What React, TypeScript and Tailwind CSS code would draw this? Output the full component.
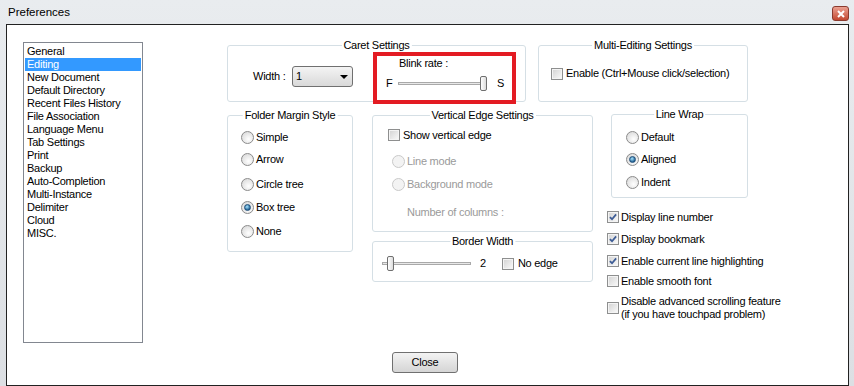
import React from "react";

const Radio = ({ checked = false, disabled = false }: { checked?: boolean; disabled?: boolean }) => (
  <span
    className={`inline-flex items-center justify-center w-[13px] h-[13px] rounded-full border shrink-0 ${
      disabled
        ? "border-[#c9c9c9] bg-[#f3f3f3]"
        : "border-[#8b8b8b] bg-[radial-gradient(circle_at_60%_65%,#ffffff,#dcdcdc_80%)]"
    }`}
  >
    {checked && (
      <span className="w-[7px] h-[7px] rounded-full border border-[#1d4d78] bg-[radial-gradient(circle_at_40%_35%,#a6e4ff,#1a5a8e_75%)]" />
    )}
  </span>
);

const Check = ({ checked = false }: { checked?: boolean }) => (
  <span className="inline-flex items-center justify-center w-[12px] h-[12px] border border-[#8e8f8f] bg-white shrink-0">
    <span className="flex items-center justify-center w-[10px] h-[10px] border border-[#f4f4f4] bg-gradient-to-br from-[#d6d6d6] to-[#f7f7f7]">
      {checked && (
        <svg width="8" height="8" viewBox="0 0 9 9">
          <path d="M1 4.6 L3.4 7 L8 1.6" fill="none" stroke="#3d5c95" strokeWidth="2" />
        </svg>
      )}
    </span>
  </span>
);

const Group = ({
  title,
  className,
  children,
}: {
  title: string;
  className: string;
  children?: React.ReactNode;
}) => (
  <div className={`relative border border-[#d5dfe5] rounded-[3px] shrink-0 ${className}`}>
    <span className="absolute left-1/2 -translate-x-1/2 -top-[7px] bg-white px-[2px] leading-[13px] whitespace-nowrap">
      {title}
    </span>
    {children}
  </div>
);

const Thumb = ({ className }: { className: string }) => (
  <span
    className={`absolute top-0 w-[7px] h-[15px] rounded-[2px] border border-[#6f6f6f] bg-gradient-to-r from-[#ffffff] to-[#dcdcdc] ${className}`}
  />
);

const listItems = [
  "General",
  "Editing",
  "New Document",
  "Default Directory",
  "Recent Files History",
  "File Association",
  "Language Menu",
  "Tab Settings",
  "Print",
  "Backup",
  "Auto-Completion",
  "Multi-Instance",
  "Delimiter",
  "Cloud",
  "MISC.",
];

export default function App() {
  return (
    <div className="w-[854px] h-[386px] flex flex-col bg-gradient-to-b from-[#e9ecef] to-[#dcdfe3] font-['Liberation_Sans',Arial,sans-serif] text-[11px] leading-[13px] tracking-[-0.25px] text-black overflow-hidden">
      {/* Title bar */}
      <div className="h-[24px] flex items-start shrink-0">
        <span className="ml-[8px] mt-[5px] text-[11.5px] leading-[15px] tracking-normal">Preferences</span>
        <div className="ml-auto mr-[5px] mt-[6px] w-[17px] h-[15px] rounded-[3px] border border-[#8a3a2e] bg-gradient-to-b from-[#eba091] to-[#c2462f] flex items-center justify-center">
          <svg width="8" height="8" viewBox="0 0 8 8">
            <path d="M1 1 L7 7 M7 1 L1 7" stroke="#ffffff" strokeWidth="2" />
          </svg>
        </div>
      </div>

      {/* Body */}
      <div className="ml-[6px] w-[843px] h-[362px] border border-[#222222] bg-white flex shrink-0">
        {/* List */}
        <div className="ml-[16px] mt-[17px] w-[120px] h-[301px] border border-[#828790] pt-[2px] px-[1px] flex flex-col shrink-0">
          {listItems.map((it) => (
            <div
              key={it}
              className={`h-[13px] leading-[13px] pl-[2px] whitespace-nowrap ${
                it === "Editing" ? "bg-[#3399ff] text-white" : ""
              }`}
            >
              {it}
            </div>
          ))}
        </div>

        {/* Right area */}
        <div className="ml-[84px] flex flex-col">
          {/* Row 1 */}
          <div className="flex items-start mt-[20px]">
            <Group title="Caret Settings" className="w-[299px] h-[57px] flex items-start">
              <div className="flex items-center ml-[25px] mt-[20px] h-[21px]">
                <span className="w-[39px]">Width :</span>
                <div className="w-[61px] h-[21px] border border-[#707070] rounded-[3px] bg-gradient-to-b from-[#f4f4f4] to-[#d9d9d9] flex items-center pl-[3px] pr-[4px]">
                  <span className="flex-1">1</span>
                  <svg width="8" height="4" viewBox="0 0 8 4">
                    <polygon points="0,0 8,0 4,4" fill="#000000" />
                  </svg>
                </div>
              </div>
              <div className="ml-[20px] mt-[6px] w-[143px] h-[52px] border-[4px] border-[#e31b23] shrink-0 flex flex-col">
                <span className="ml-[22px] mt-[1px]">Blink rate :</span>
                <div className="flex items-center mt-[6px] h-[15px] pl-[9px]">
                  <span className="w-[12px]">F</span>
                  <div className="relative w-[90px] h-[15px]">
                    <span className="absolute left-0 right-[4px] top-[6px] h-[3px] border border-[#a9a9a9] bg-[#e8e8e8]" />
                    <Thumb className="left-[82px]" />
                  </div>
                  <span className="ml-[9px]">S</span>
                </div>
              </div>
            </Group>

            <Group title="Multi-Editing Settings" className="ml-[12px] w-[210px] h-[57px]">
              <div className="flex items-center gap-[3px] ml-[12px] mt-[21px] h-[13px]">
                <Check />
                <span>Enable (Ctrl+Mouse click/selection)</span>
              </div>
            </Group>
          </div>

          {/* Row 2 */}
          <div className="flex items-start mt-[12px] h-[238px]">
            <Group title="Folder Margin Style" className="mt-[1px] w-[126px] h-[137px] flex flex-col pl-[13px]">
              <div className="flex items-center gap-[2px] h-[16px] mt-[13px]">
                <Radio />
                <span>Simple</span>
              </div>
              <div className="flex items-center gap-[2px] h-[16px] mt-[6px]">
                <Radio />
                <span>Arrow</span>
              </div>
              <div className="flex items-center gap-[2px] h-[16px] mt-[9px]">
                <Radio />
                <span>Circle tree</span>
              </div>
              <div className="flex items-center gap-[2px] h-[16px] mt-[7px]">
                <Radio checked />
                <span>Box tree</span>
              </div>
              <div className="flex items-center gap-[2px] h-[16px] mt-[8px]">
                <Radio />
                <span>None</span>
              </div>
            </Group>

            <div className="ml-[19px] mt-[1px] w-[221px] flex flex-col">
              <Group title="Vertical Edge Settings" className="h-[117px] flex flex-col pl-[15px]">
                <div className="flex items-center gap-[3px] h-[16px] mt-[11px]">
                  <Check />
                  <span>Show vertical edge</span>
                </div>
                <div className="flex items-center gap-[2px] h-[16px] mt-[10px] ml-[4px] text-[#9a9a9a]">
                  <Radio disabled />
                  <span>Line mode</span>
                </div>
                <div className="flex items-center gap-[2px] h-[16px] mt-[7px] ml-[4px] text-[#9a9a9a]">
                  <Radio disabled />
                  <span>Background mode</span>
                </div>
                <span className="h-[16px] leading-[16px] mt-[12px] ml-[19px] text-[#9a9a9a]">Number of columns :</span>
              </Group>

              <Group title="Border Width" className="mt-[9px] h-[41px] flex items-start pl-[9px]">
                <div className="flex items-center mt-[14px] h-[15px]">
                  <div className="relative w-[89px] h-[15px]">
                    <span className="absolute left-0 right-0 top-[6px] h-[3px] border border-[#a9a9a9] bg-[#e8e8e8]" />
                    <Thumb className="left-[5px]" />
                  </div>
                  <span className="ml-[9px]">2</span>
                  <span className="ml-[16px] flex items-center gap-[4px]">
                    <Check />
                    <span>No edge</span>
                  </span>
                </div>
              </Group>
            </div>

            <div className="ml-[14px] flex flex-col">
              <Group title="Line Wrap" className="ml-[4px] w-[137px] h-[84px] flex flex-col pl-[14px]">
                <div className="flex items-center gap-[2px] h-[16px] mt-[14px]">
                  <Radio />
                  <span>Default</span>
                </div>
                <div className="flex items-center gap-[2px] h-[16px] mt-[6px]">
                  <Radio checked />
                  <span>Aligned</span>
                </div>
                <div className="flex items-center gap-[2px] h-[16px] mt-[7px]">
                  <Radio />
                  <span>Indent</span>
                </div>
              </Group>

              <div className="flex items-center gap-[2px] h-[16px] mt-[11px]">
                <Check checked />
                <span>Display line number</span>
              </div>
              <div className="flex items-center gap-[2px] h-[16px] mt-[6px]">
                <Check checked />
                <span>Display bookmark</span>
              </div>
              <div className="flex items-center gap-[2px] h-[16px] mt-[6px]">
                <Check checked />
                <span>Enable current line highlighting</span>
              </div>
              <div className="flex items-center gap-[2px] h-[16px] mt-[4px]">
                <Check />
                <span>Enable smooth font</span>
              </div>
              <div className="flex items-center gap-[2px] h-[26px] mt-[6px]">
                <Check />
                <span className="flex flex-col">
                  <span>Disable advanced scrolling feature</span>
                  <span>(if you have touchpad problem)</span>
                </span>
              </div>
            </div>
          </div>

          {/* Close button */}
          <button className="ml-[165px] w-[66px] h-[21px] border border-[#707070] rounded-[3px] bg-gradient-to-b from-[#f3f3f3] to-[#d5d5d5] leading-[13px] text-black">
            Close
          </button>
        </div>
      </div>
    </div>
  );
}
